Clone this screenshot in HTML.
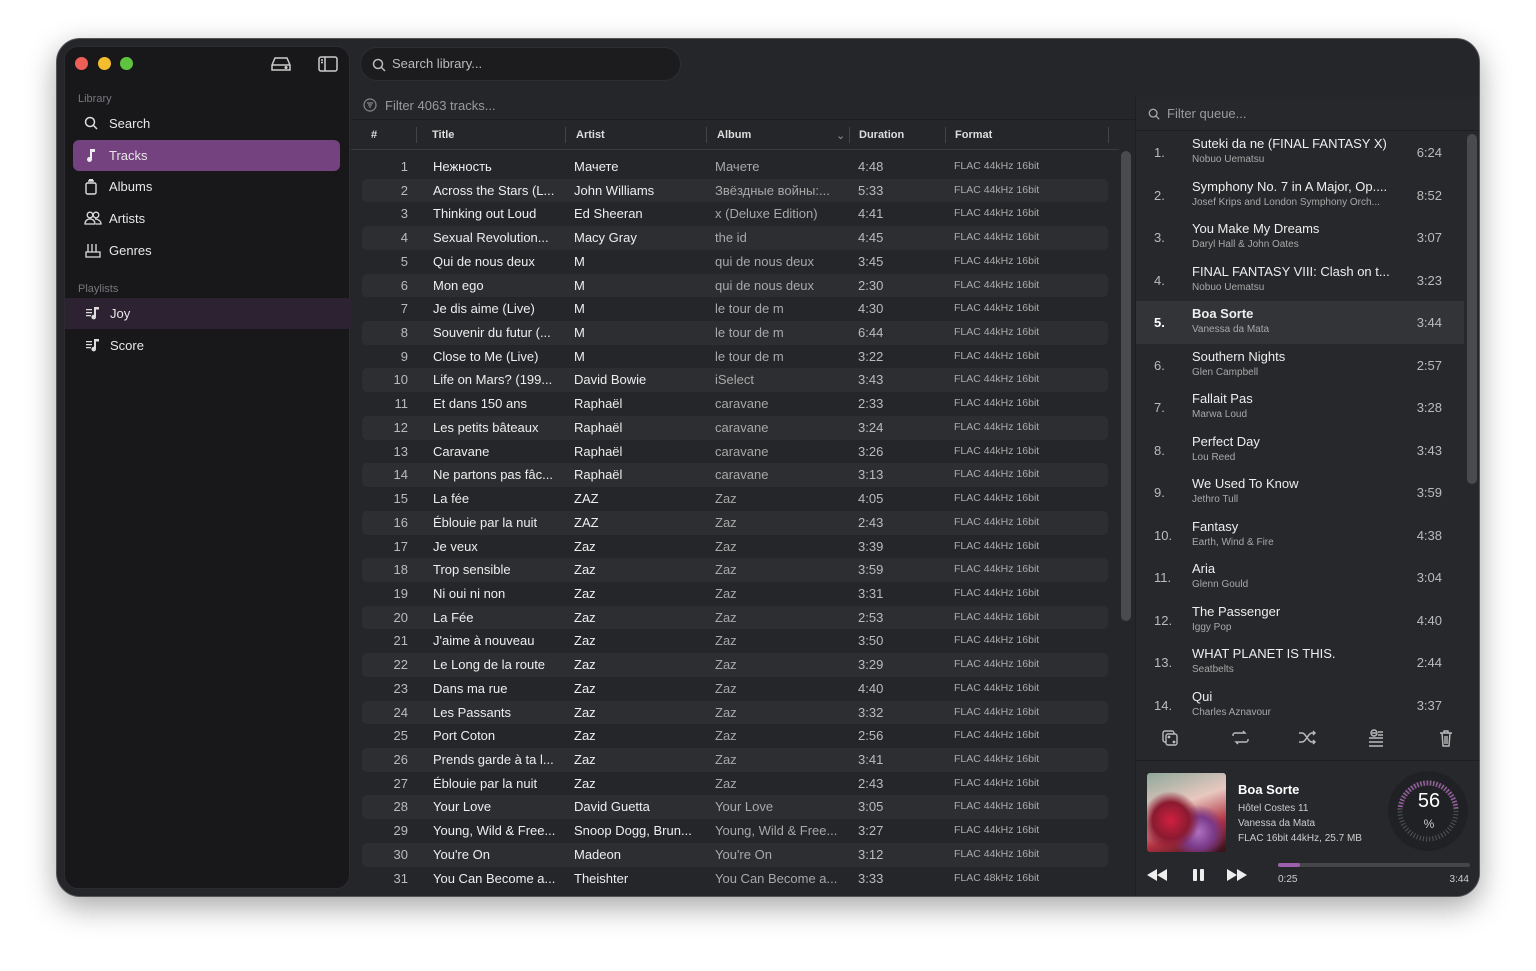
<!DOCTYPE html><html><head><meta charset="utf-8"><style>
*{box-sizing:border-box;margin:0;padding:0}
body{width:1536px;height:971px;background:#fff;font-family:"Liberation Sans","Noto Sans CJK SC",sans-serif;position:relative;overflow:hidden;color:#e6e6e6}
.win{position:absolute;left:56px;top:38px;width:1424px;height:859px;background:#252629;border-radius:24px;border:1px solid #555;overflow:hidden;box-shadow:0 10px 30px rgba(0,0,0,.35)}
.side{position:absolute;left:7px;top:7px;width:286px;height:843px;background:#18181b;border-radius:14px;border:1px solid #2c2c30}
.a{position:absolute}
.sec{font-size:11px;color:#77777c}
.item{position:absolute;left:8px;width:267px;height:31px;font-size:13px;color:#e8e8e8;line-height:31px;padding-left:36px;border-radius:6px}
.item svg{position:absolute;left:11px;top:8px}
.dot{position:absolute;top:18px;width:13px;height:13px;border-radius:50%}
.search{position:absolute;left:303px;top:8px;width:321px;height:34px;border-radius:17px;background:#1c1c1f;border:1px solid #2e2e32;font-size:13px;color:#bbb;line-height:32px;padding-left:31px}
.hdr{position:absolute;top:85px;left:294px;width:768px;height:26px;font-size:11px;color:#ddd;border-bottom:1px solid #3a3b3e;font-weight:bold}
.hdr span{position:absolute;top:5px}
.hdr i{position:absolute;top:3px;width:1px;height:16px;background:#444}
.rows{position:absolute;left:305px;top:116px;width:746px}
.r{height:23.73px;position:relative;font-size:13px;line-height:23.73px;border-radius:5px}
.r:nth-child(even){background:#2d2e31}
.r span{position:absolute;white-space:nowrap}
.r .n{right:700px;color:#bbb}
.r .t{left:71px;color:#eee}
.r .ar{left:212px;color:#eee}
.r .al{left:353px;color:#a8a8a8}
.r .d{left:496px;color:#bbb}
.r .f{left:592px;font-size:10.5px;color:#aaa}
.queue{position:absolute;left:1078px;top:58px;width:346px;height:801px;background:#27282b;border-left:1px solid #1f1f22}
.q{position:absolute;left:0;width:328px;height:42.5px}
.q .qn{position:absolute;left:18px;top:14px;font-size:13px;color:#bbb}
.q .qt{position:absolute;left:56px;top:5px;font-size:13px;color:#eee;white-space:nowrap}
.q .qa{position:absolute;left:56px;top:23px;font-size:10px;color:#a8a8a8;white-space:nowrap}
.q .qd{position:absolute;right:22px;top:14px;font-size:13px;color:#bbb}
</style></head><body>
<div class="win">
 <div class="side">
  <div class="dot" style="left:10px;top:10px;background:#ee5f57"></div>
  <div class="dot" style="left:33px;top:10px;background:#f4bd2f"></div>
  <div class="dot" style="left:55px;top:10px;background:#5fc33f"></div>
  <svg class="a" style="left:206px;top:9px" width="20" height="16" viewBox="0 0 20 16" fill="none" stroke="#ccc" stroke-width="1.5"><path d="M4 2h12l3 7v5H1V9z M1 9h18"/><circle cx="15" cy="11.5" r=".8" fill="#ccc"/></svg>
  <svg class="a" style="left:253px;top:9px" width="20" height="16" viewBox="0 0 20 16" fill="none" stroke="#ccc" stroke-width="1.5"><rect x="1" y="1" width="18" height="14" rx="2"/><path d="M7 1v14M3 4h2M3 6.5h2"/></svg>
  <div class="a sec" style="left:13px;top:46px">Library</div>
  <div class="item" style="top:61px"><svg width="14" height="14" viewBox="0 0 14 14" fill="none" stroke="#ddd" stroke-width="1.5"><circle cx="6" cy="6" r="4.5"/><path d="M9.5 9.5l3.5 3.5"/></svg>Search</div>
  <div class="item" style="top:93px;background:#74427f"><svg width="14" height="15" viewBox="0 0 14 15" fill="#eee"><path d="M6 1h5v3H8v7.5A2.5 2.5 0 1 1 6 9z"/></svg>Tracks</div>
  <div class="item" style="top:124px"><svg width="14" height="16" viewBox="0 0 14 16" fill="none" stroke="#ddd" stroke-width="1.4"><rect x="2" y="4" width="10" height="11" rx="1.5"/><path d="M4 2h6M5 .7h4"/></svg>Albums</div>
  <div class="item" style="top:156px"><svg width="18" height="14" viewBox="0 0 18 14" fill="none" stroke="#ddd" stroke-width="1.3"><circle cx="6" cy="4" r="2.8"/><circle cx="12" cy="4" r="2.8"/><path d="M1 13c0-3 2-5 5-5s5 2 5 5zM11 8c3 0 6 2 6 5h-5"/></svg>Artists</div>
  <div class="item" style="top:188px"><svg width="18" height="16" viewBox="0 0 18 16" fill="none" stroke="#ddd" stroke-width="1.3"><path d="M4 1v8M8 1v8M12 1v8M2 9h14v5H2z"/></svg>Genres</div>
  <div class="a sec" style="left:13px;top:236px">Playlists</div>
  <div class="item" style="top:251px;left:0;width:286px;border-radius:0;background:#2d2231;padding-left:45px"><svg style="left:20px" width="16" height="14" viewBox="0 0 16 14" fill="#ddd"><path d="M1 3h6v1.3H1zM1 6h6v1.3H1zM1 9h5v1.3H1zM9 1h5v2.5h-3V11a2.3 2.3 0 1 1-2-2.2z"/></svg>Joy</div>
  <div class="item" style="top:283px;left:0;width:286px;padding-left:45px"><svg style="left:20px" width="16" height="14" viewBox="0 0 16 14" fill="#ddd"><path d="M1 3h6v1.3H1zM1 6h6v1.3H1zM1 9h5v1.3H1zM9 1h5v2.5h-3V11a2.3 2.3 0 1 1-2-2.2z"/></svg>Score</div>
 </div>
 <div class="search"><svg class="a" style="left:11px;top:10px" width="14" height="14" viewBox="0 0 14 14" fill="none" stroke="#bbb" stroke-width="1.5"><circle cx="6" cy="6" r="4.5"/><path d="M9.5 9.5l3.5 3.5"/></svg>Search library...</div>
 <svg class="a" style="left:306px;top:59px" width="14" height="14" viewBox="0 0 14 14" fill="none" stroke="#888" stroke-width="1.2"><circle cx="7" cy="7" r="6"/><path d="M4 5h6M5 7h4M6 9h2"/></svg>
 <div class="a" style="left:328px;top:59px;font-size:13px;color:#9a9a9e">Filter 4063 tracks...</div>
 <div class="a" style="left:294px;top:80px;width:784px;height:1px;background:#1e1e21"></div>
 <div class="hdr"><span style="left:20px">#</span><i style="left:65px"></i><span style="left:81px">Title</span><i style="left:214px"></i><span style="left:225px">Artist</span><i style="left:355px"></i><span style="left:366px">Album</span><span style="left:485px;color:#999;font-weight:normal">⌄</span><i style="left:498px"></i><span style="left:508px">Duration</span><i style="left:594px"></i><span style="left:604px">Format</span><i style="left:757px"></i></div>
 <div class="a" style="left:1064px;top:112px;width:10px;height:470px;border-radius:5px;background:#4a4b4e"></div>
 <div class="rows">
<div class="r"><span class="n">1</span><span class="t">Нежность</span><span class="ar">Мачете</span><span class="al">Мачете</span><span class="d">4:48</span><span class="f">FLAC 44kHz 16bit</span></div>
<div class="r"><span class="n">2</span><span class="t">Across the Stars (L...</span><span class="ar">John Williams</span><span class="al">Звёздные войны:...</span><span class="d">5:33</span><span class="f">FLAC 44kHz 16bit</span></div>
<div class="r"><span class="n">3</span><span class="t">Thinking out Loud</span><span class="ar">Ed Sheeran</span><span class="al">x (Deluxe Edition)</span><span class="d">4:41</span><span class="f">FLAC 44kHz 16bit</span></div>
<div class="r"><span class="n">4</span><span class="t">Sexual Revolution...</span><span class="ar">Macy Gray</span><span class="al">the id</span><span class="d">4:45</span><span class="f">FLAC 44kHz 16bit</span></div>
<div class="r"><span class="n">5</span><span class="t">Qui de nous deux</span><span class="ar">M</span><span class="al">qui de nous deux</span><span class="d">3:45</span><span class="f">FLAC 44kHz 16bit</span></div>
<div class="r"><span class="n">6</span><span class="t">Mon ego</span><span class="ar">M</span><span class="al">qui de nous deux</span><span class="d">2:30</span><span class="f">FLAC 44kHz 16bit</span></div>
<div class="r"><span class="n">7</span><span class="t">Je dis aime (Live)</span><span class="ar">M</span><span class="al">le tour de m</span><span class="d">4:30</span><span class="f">FLAC 44kHz 16bit</span></div>
<div class="r"><span class="n">8</span><span class="t">Souvenir du futur (...</span><span class="ar">M</span><span class="al">le tour de m</span><span class="d">6:44</span><span class="f">FLAC 44kHz 16bit</span></div>
<div class="r"><span class="n">9</span><span class="t">Close to Me (Live)</span><span class="ar">M</span><span class="al">le tour de m</span><span class="d">3:22</span><span class="f">FLAC 44kHz 16bit</span></div>
<div class="r"><span class="n">10</span><span class="t">Life on Mars? (199...</span><span class="ar">David Bowie</span><span class="al">iSelect</span><span class="d">3:43</span><span class="f">FLAC 44kHz 16bit</span></div>
<div class="r"><span class="n">11</span><span class="t">Et dans 150 ans</span><span class="ar">Raphaël</span><span class="al">caravane</span><span class="d">2:33</span><span class="f">FLAC 44kHz 16bit</span></div>
<div class="r"><span class="n">12</span><span class="t">Les petits bâteaux</span><span class="ar">Raphaël</span><span class="al">caravane</span><span class="d">3:24</span><span class="f">FLAC 44kHz 16bit</span></div>
<div class="r"><span class="n">13</span><span class="t">Caravane</span><span class="ar">Raphaël</span><span class="al">caravane</span><span class="d">3:26</span><span class="f">FLAC 44kHz 16bit</span></div>
<div class="r"><span class="n">14</span><span class="t">Ne partons pas fâc...</span><span class="ar">Raphaël</span><span class="al">caravane</span><span class="d">3:13</span><span class="f">FLAC 44kHz 16bit</span></div>
<div class="r"><span class="n">15</span><span class="t">La fée</span><span class="ar">ZAZ</span><span class="al">Zaz</span><span class="d">4:05</span><span class="f">FLAC 44kHz 16bit</span></div>
<div class="r"><span class="n">16</span><span class="t">Éblouie par la nuit</span><span class="ar">ZAZ</span><span class="al">Zaz</span><span class="d">2:43</span><span class="f">FLAC 44kHz 16bit</span></div>
<div class="r"><span class="n">17</span><span class="t">Je veux</span><span class="ar">Zaz</span><span class="al">Zaz</span><span class="d">3:39</span><span class="f">FLAC 44kHz 16bit</span></div>
<div class="r"><span class="n">18</span><span class="t">Trop sensible</span><span class="ar">Zaz</span><span class="al">Zaz</span><span class="d">3:59</span><span class="f">FLAC 44kHz 16bit</span></div>
<div class="r"><span class="n">19</span><span class="t">Ni oui ni non</span><span class="ar">Zaz</span><span class="al">Zaz</span><span class="d">3:31</span><span class="f">FLAC 44kHz 16bit</span></div>
<div class="r"><span class="n">20</span><span class="t">La Fée</span><span class="ar">Zaz</span><span class="al">Zaz</span><span class="d">2:53</span><span class="f">FLAC 44kHz 16bit</span></div>
<div class="r"><span class="n">21</span><span class="t">J'aime à nouveau</span><span class="ar">Zaz</span><span class="al">Zaz</span><span class="d">3:50</span><span class="f">FLAC 44kHz 16bit</span></div>
<div class="r"><span class="n">22</span><span class="t">Le Long de la route</span><span class="ar">Zaz</span><span class="al">Zaz</span><span class="d">3:29</span><span class="f">FLAC 44kHz 16bit</span></div>
<div class="r"><span class="n">23</span><span class="t">Dans ma rue</span><span class="ar">Zaz</span><span class="al">Zaz</span><span class="d">4:40</span><span class="f">FLAC 44kHz 16bit</span></div>
<div class="r"><span class="n">24</span><span class="t">Les Passants</span><span class="ar">Zaz</span><span class="al">Zaz</span><span class="d">3:32</span><span class="f">FLAC 44kHz 16bit</span></div>
<div class="r"><span class="n">25</span><span class="t">Port Coton</span><span class="ar">Zaz</span><span class="al">Zaz</span><span class="d">2:56</span><span class="f">FLAC 44kHz 16bit</span></div>
<div class="r"><span class="n">26</span><span class="t">Prends garde à ta l...</span><span class="ar">Zaz</span><span class="al">Zaz</span><span class="d">3:41</span><span class="f">FLAC 44kHz 16bit</span></div>
<div class="r"><span class="n">27</span><span class="t">Éblouie par la nuit</span><span class="ar">Zaz</span><span class="al">Zaz</span><span class="d">2:43</span><span class="f">FLAC 44kHz 16bit</span></div>
<div class="r"><span class="n">28</span><span class="t">Your Love</span><span class="ar">David Guetta</span><span class="al">Your Love</span><span class="d">3:05</span><span class="f">FLAC 44kHz 16bit</span></div>
<div class="r"><span class="n">29</span><span class="t">Young, Wild &amp; Free...</span><span class="ar">Snoop Dogg, Brun...</span><span class="al">Young, Wild &amp; Free...</span><span class="d">3:27</span><span class="f">FLAC 44kHz 16bit</span></div>
<div class="r"><span class="n">30</span><span class="t">You're On</span><span class="ar">Madeon</span><span class="al">You're On</span><span class="d">3:12</span><span class="f">FLAC 44kHz 16bit</span></div>
<div class="r"><span class="n">31</span><span class="t">You Can Become a...</span><span class="ar">Theishter</span><span class="al">You Can Become a...</span><span class="d">3:33</span><span class="f">FLAC 48kHz 16bit</span></div>
 </div>
 <div class="queue">
  <svg class="a" style="left:12px;top:11px" width="12" height="12" viewBox="0 0 14 14" fill="none" stroke="#aaa" stroke-width="1.5"><circle cx="6" cy="6" r="4.5"/><path d="M9.5 9.5l3.5 3.5"/></svg>
  <div class="a" style="left:31px;top:9px;font-size:13px;color:#9a9a9e">Filter queue...</div>
  <div class="a" style="left:0;top:33px;width:346px;height:1px;background:#1e1e21"></div>
  <div class="a" style="left:331px;top:37px;width:10px;height:350px;border-radius:5px;background:#4a4b4e"></div>
  <div class="a" style="left:0;top:34px;width:346px;height:586px;overflow:hidden">
  <div class="q" style="top:0"><span class="qn">1.</span><span class="qt">Suteki da ne (FINAL FANTASY X)</span><span class="qa">Nobuo Uematsu</span><span class="qd">6:24</span></div>
  <div class="q" style="top:42.5px"><span class="qn">2.</span><span class="qt">Symphony No. 7 in A Major, Op....</span><span class="qa">Josef Krips and London Symphony Orch...</span><span class="qd">8:52</span></div>
  <div class="q" style="top:85px"><span class="qn">3.</span><span class="qt">You Make My Dreams</span><span class="qa">Daryl Hall &amp; John Oates</span><span class="qd">3:07</span></div>
  <div class="q" style="top:127.5px"><span class="qn">4.</span><span class="qt">FINAL FANTASY VIII: Clash on t...</span><span class="qa">Nobuo Uematsu</span><span class="qd">3:23</span></div>
  <div class="q" style="top:170px;background:#333438"><span class="qn" style="color:#fff;font-weight:bold">5.</span><span class="qt" style="font-weight:bold">Boa Sorte</span><span class="qa">Vanessa da Mata</span><span class="qd">3:44</span></div>
  <div class="q" style="top:212.5px"><span class="qn">6.</span><span class="qt">Southern Nights</span><span class="qa">Glen Campbell</span><span class="qd">2:57</span></div>
  <div class="q" style="top:255px"><span class="qn">7.</span><span class="qt">Fallait Pas</span><span class="qa">Marwa Loud</span><span class="qd">3:28</span></div>
  <div class="q" style="top:297.5px"><span class="qn">8.</span><span class="qt">Perfect Day</span><span class="qa">Lou Reed</span><span class="qd">3:43</span></div>
  <div class="q" style="top:340px"><span class="qn">9.</span><span class="qt">We Used To Know</span><span class="qa">Jethro Tull</span><span class="qd">3:59</span></div>
  <div class="q" style="top:382.5px"><span class="qn">10.</span><span class="qt">Fantasy</span><span class="qa">Earth, Wind &amp; Fire</span><span class="qd">4:38</span></div>
  <div class="q" style="top:425px"><span class="qn">11.</span><span class="qt">Aria</span><span class="qa">Glenn Gould</span><span class="qd">3:04</span></div>
  <div class="q" style="top:467.5px"><span class="qn">12.</span><span class="qt">The Passenger</span><span class="qa">Iggy Pop</span><span class="qd">4:40</span></div>
  <div class="q" style="top:510px"><span class="qn">13.</span><span class="qt">WHAT PLANET IS THIS.</span><span class="qa">Seatbelts</span><span class="qd">2:44</span></div>
  <div class="q" style="top:552.5px"><span class="qn">14.</span><span class="qt">Qui</span><span class="qa">Charles Aznavour</span><span class="qd">3:37</span></div>
  </div>
  <svg class="a" style="left:0;top:630px" width="346" height="22" viewBox="0 0 346 22" fill="none" stroke="#bbb" stroke-width="1.4">
   <rect x="27" y="4" width="11" height="11" rx="2"/><rect x="30" y="7" width="11" height="11" rx="2" fill="#27282b"/><circle cx="33" cy="10" r=".7" fill="#bbb"/><circle cx="38" cy="15" r=".7" fill="#bbb"/>
   <path d="M97 9v-1a2 2 0 0 1 2-2h10l-2-2M112 12v1a2 2 0 0 1-2 2H100l2 2"/>
   <path d="M163 6h3c4 0 6 9 10 9h3M163 15h3c4 0 6-9 10-9h3M177 4l2 2-2 2M177 13l2 2-2 2"/>
   <circle cx="238" cy="6" r="3"/><path d="M236 6h4M233 11h14M233 15h14M233 19h14M242 5h5M242 8h5"/>
   <path d="M304 6h12M308 6V4h4v2M306 6l1 13h6l1-13M309 9v8M311 9v8"/>
  </svg>
  <div class="a" style="left:0;top:663px;width:346px;height:1px;background:#1e1e21"></div>
  <div class="a" style="left:11px;top:676px;width:79px;height:79px;border-radius:3px;background:radial-gradient(circle at 30% 60%,#d02040 0,#8a1a30 25%,transparent 40%),radial-gradient(circle at 65% 75%,#b070c0 0,#7a3a8a 20%,transparent 35%),linear-gradient(160deg,#8ea89a 0%,#e8c8c0 40%,#b03040 70%,#301018 100%)"></div>
  <div class="a" style="left:102px;top:685px;font-size:13px;font-weight:bold;color:#fff">Boa Sorte</div>
  <div class="a" style="left:102px;top:704px;font-size:10px;color:#ccc;line-height:15px">Hôtel Costes 11<br>Vanessa da Mata<br>FLAC 16bit 44kHz, 25.7 MB</div>
  <div class="a" style="left:252px;top:674px;width:80px;height:80px;border-radius:50%;background:#202124"></div>
  <svg class="a" style="left:260px;top:682px" width="64" height="64" viewBox="0 0 64 64"><circle cx="32" cy="32" r="28" fill="none" stroke="#555" stroke-width="5" stroke-dasharray="1 2.2"/><circle cx="32" cy="32" r="28" fill="none" stroke="#b060c0" stroke-width="5" stroke-dasharray="1 2.2" transform="rotate(90 32 32)" style="clip-path:inset(0 32px 0 0)"/></svg>
  <div class="a" style="left:262px;top:693px;width:62px;text-align:center;font-size:20px;color:#fff">56</div>
  <div class="a" style="left:262px;top:720px;width:62px;text-align:center;font-size:12px;color:#ccc">%</div>
  <div class="a" style="left:142px;top:766px;width:192px;height:4px;border-radius:2px;background:#45464a"></div>
  <div class="a" style="left:142px;top:766px;width:22px;height:4px;border-radius:2px;background:#a060b0"></div>
  <div class="a" style="left:142px;top:777px;font-size:10px;color:#ccc">0:25</div>
  <div class="a" style="right:12px;top:777px;font-size:10px;color:#ccc">3:44</div>
  <svg class="a" style="left:11px;top:770px" width="100" height="16" viewBox="0 0 100 16" fill="#eee"><path d="M0 8l10-6v12zM10 8l10-6v12z"/><rect x="46" y="2" width="4" height="12" rx="1"/><rect x="53" y="2" width="4" height="12" rx="1"/><path d="M80 2l10 6-10 6zM90 2l10 6-10 6z"/></svg>
 </div>
</div>
</body></html>
